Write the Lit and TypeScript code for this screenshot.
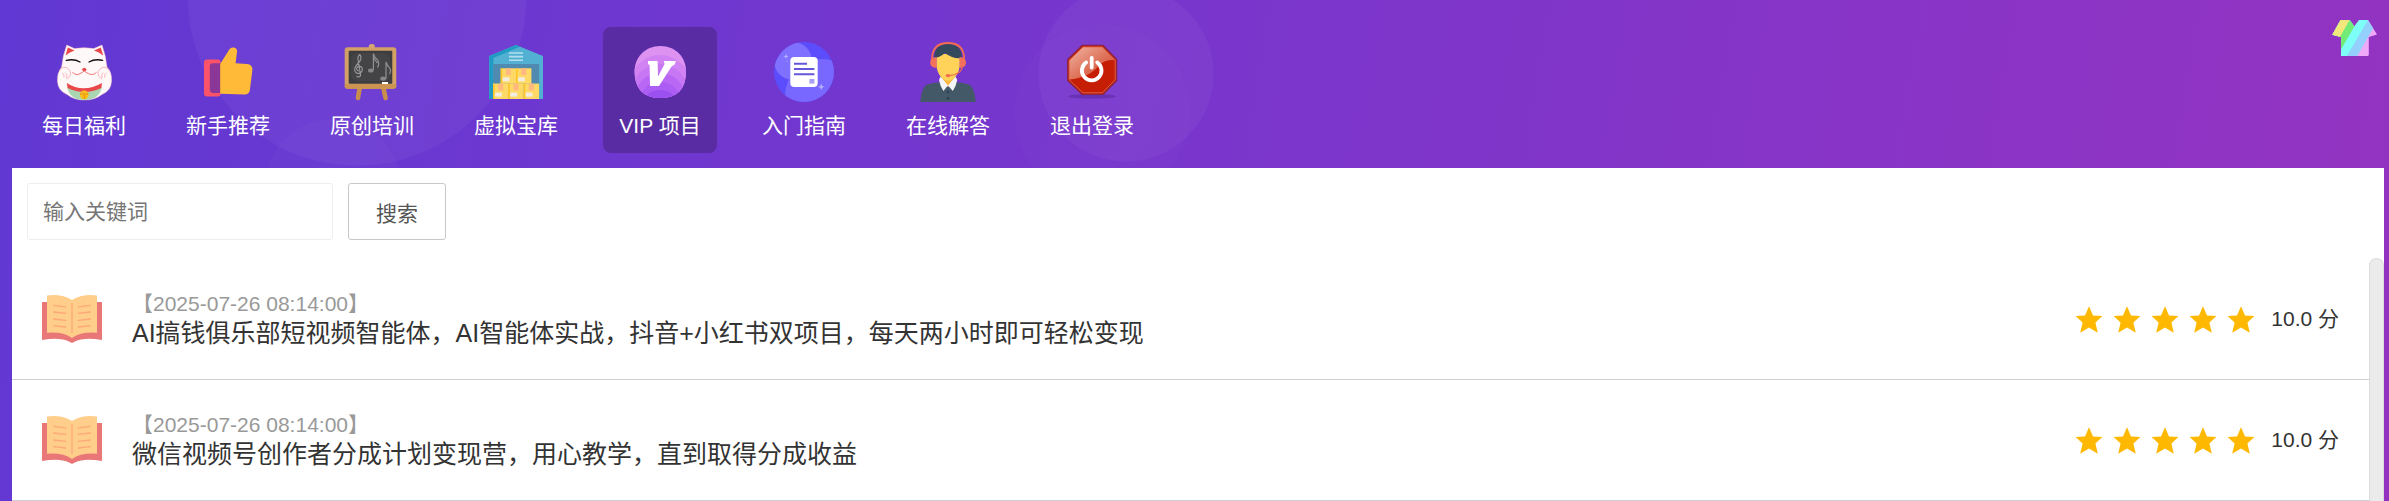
import { LitElement, html, css, svg, TemplateResult } from "lit";
import { customElement, property, state } from "lit/decorators.js";
import { classMap } from "lit/directives/class-map.js";

const cat = svg`
  <path fill="#fff8f8" stroke="#f3b9c4" stroke-width=".5" d="M12.7 3 L20.5 6.6 Q30 4.8 39.8 6.6 L48 3 Q52 14 53 25 Q58 30 57.6 39 Q57 49 48 52.5 Q41 58 30.3 58 Q20 58 13 52.5 Q4 49 3.4 39 Q3 31 7.6 25 Q8.6 14 12.7 3Z"/>
  <path fill="#e9484a" d="M13.8 5.4 L20.6 8.6 Q15.6 10 11.6 13.6Z M46.8 5.4 L40 8.6 Q45 10 49.2 13.6Z"/>
  <path fill="none" stroke="#111" stroke-width="1.4" stroke-linecap="round" d="M12.3 18.4 Q20 16.4 26 20 M35 20 Q41 16.4 48.6 18.4"/>
  <path fill="#e9484a" d="M27.8 28 Q30.3 23.4 32.8 28 L30.3 29.6Z"/>
  <path fill="none" stroke="#e9585a" stroke-width=".8" d="M18.3 30.2 Q22 34 26 31.6 Q28.8 30.6 30.3 28.8 Q31.8 30.6 34.6 31.6 Q39 34 42.6 30.2"/>
  <path fill="none" stroke="#f08a90" stroke-width=".6" d="M5 29 A6 6 0 1 1 12.6 37 M55.6 29 A6 6 0 1 0 48 37 M8 31 Q10.6 31.6 10 35.6 M11.4 30.6 Q13.6 32 12.6 36 M52.6 31 Q50 31.6 50.6 35.6 M49.2 30.6 Q47 32 48 36"/>
  <path fill="#a9d6b0" d="M13 45 Q30 54 48 45 Q45 58 30.3 58 Q16 58 13 45Z"/>
  <path fill="#e9484a" d="M12.8 41 Q29 51.6 48 41 L47.4 46 Q30 54 13.6 46Z"/>
  <circle cx="30.3" cy="52.8" r="4.4" fill="#fbbf1d"/>
  <path stroke="#dc8a12" stroke-width=".9" d="M26 52 H34.6 M30.3 53 V57"/>`;

const thumb = svg`
  <rect x="6" y="17.4" width="16.6" height="37" rx="3" fill="#fb5369"/>
  <path fill="#8a3797" d="M22.4 21.2 H15 Q11.8 21.2 11.8 24.4 V47.6 Q11.8 51 15 51 H22.4Z"/>
  <path fill="#ffba38" d="M22.2 22 L31.6 7 Q33.2 4.8 36.2 5.6 Q39.6 6.8 39 10 L37.6 21.2 L49 22 Q54.6 22.6 54.4 28 L51.8 48.6 Q51 52.2 47.4 52.4 L22.2 51.8Z"/>`;

const board = svg`
  <path stroke="#c98f4a" stroke-width="4.6" stroke-linecap="round" d="M17.6 46 L16 56 M41.4 46 L43.6 56"/>
  <path fill="#d8a974" d="M26.8 6 V4.4 Q27 2 29.8 2 Q32.6 2 32.8 4.4 V6Z"/>
  <rect x="2.7" y="5.3" width="51.6" height="41.4" rx="3" fill="#d3a065"/>
  <rect x="2.7" y="42" width="51.6" height="4.7" rx="2.4" fill="#cc9450"/>
  <rect x="6.7" y="8.7" width="43.6" height="33" rx="1" fill="#3d3d3f"/>
  <rect x="9" y="11" width="39" height="28" rx="6" fill="#4a4a4c" opacity=".55"/>
  <path fill="none" stroke="#9a9a9a" stroke-width="1.1" stroke-linecap="round" d="M16.6 29 Q13.6 28 15.2 25.4 Q18 23 20.2 26 Q21 30.4 16.6 31.6 Q11.6 30.8 13 25.6 Q14.6 22.6 18 19 Q20 15.4 17.8 12.6 Q15.4 14 16.2 19 L18.6 33 Q17.8 36 15 34.4"/>
  <path fill="none" stroke="#8f8f8f" stroke-width="1.2" d="M31.4 28 V11.6 Q32.6 16 36 18.6 Q37.6 22 35.6 25.6 M31.4 15 Q32.4 18 35.4 21 M44 36.4 V20 Q45 24 48 26.4 Q49.4 29 47.6 32"/>
  <ellipse cx="28.8" cy="28.4" rx="2.8" ry="2" fill="#858585"/>
  <ellipse cx="41.2" cy="36.6" rx="3" ry="2.2" fill="#858585"/>
  <rect x="40" y="40" width="6" height="2" fill="#fff"/>`;

const box = (x: number, y: number) => svg`
  <rect x=${x} y=${y} width="15.4" height="15.4" fill="#ffd966"/>
  <rect x=${x} y=${y} width="1.6" height="15.4" fill="#ffc629"/>
  <rect x=${x + 5.2} y=${y} width="5" height="6.8" fill="#ffb980"/>
  <rect x=${x + 2} y=${y + 9} width="6.8" height="4" fill="#f1ede2"/>`;

const warehouse = svg`
  <path fill="#52b1d2" d="M3.3 14 L30 3 L57 14 V57 H3.3Z"/>
  <path fill="#229bc4" d="M3.3 14 L30 3 L34 4.6 L7.4 16 V57 H3.3Z"/>
  <rect x="7.2" y="22" width="46" height="35" fill="#518ab0"/>
  <path stroke="#b5dfee" stroke-width="1.6" d="M23 11 H37 M23 14.6 H37 M23 18.2 H37"/>
  ${box(14.7, 26.3)}${box(30, 26.3)}${box(7, 41.6)}${box(22.3, 41.6)}${box(37.7, 41.6)}`;

const vip = svg`
  <clipPath id="vip-shape"><path d="M30.3 4 C46 4 56 15.6 56 29 C56 47 47 56 30.3 56 C14 56 4.6 47 4.6 29 C4.6 15.6 15 4 30.3 4Z"/></clipPath>
  <g clip-path="url(#vip-shape)">
    <rect width="60" height="60" fill="#dd92f2"/>
    <ellipse cx="30" cy="45" rx="31" ry="32" fill="#d283f3"/>
    <ellipse cx="30" cy="50" rx="28" ry="28" fill="#c777f4"/>
    <ellipse cx="30" cy="55" rx="25" ry="24" fill="#b868f5"/>
    <ellipse cx="30" cy="58" rx="20" ry="18" fill="#ab5df4"/>
    <ellipse cx="30" cy="60" rx="16" ry="12" fill="#9b50f0"/>
  </g>
  <path fill="#fff" d="M18 19 H27.6 L28 34.6 L34.6 22 L33.8 19 H46 L44.6 22.4 L41.6 24.4 L29 44 H20 L19.6 23 L18 22Z"/>`;

const guide = svg`
  <clipPath id="guide-shape"><circle cx="30" cy="30" r="30"/></clipPath>
  <g clip-path="url(#guide-shape)">
    <rect width="60" height="60" fill="#5c4dfc"/>
    <circle cx="19" cy="19" r="19" fill="#7f70ff"/>
    <circle cx="48" cy="54" r="37" fill="#7d6dff" opacity=".85"/>
  </g>
  <rect x="16.3" y="15" width="27.4" height="30" rx="4" fill="#fff"/>
  <path stroke="#6457d9" stroke-width="2" d="M20 21.7 H33 M20 27 H40.4 M20 32.2 H40.4"/>
  <rect x="35.4" y="37" width="5" height="4.6" fill="#a79ff5"/>
  <path fill="#b9b2ff" d="M12 11.6 L12.7 13.7 L14.8 14.4 L12.7 15.1 L12 17.2 L11.3 15.1 L9.2 14.4 L11.3 13.7Z M47.2 41.4 L48.1 43.9 L50.6 44.8 L48.1 45.7 L47.2 48.2 L46.3 45.7 L43.8 44.8 L46.3 43.9Z"/>
  <circle cx="13" cy="19.4" r=".7" fill="#a79ff5"/>`;

const agent = svg`
  <path fill="#445967" d="M2.2 60 Q3.6 45 9 42.6 Q13 41 21 40.4 L30 45 L39 40.4 Q47 41 51 42.6 Q56.4 45 57.8 60Z"/>
  <path fill="#fbb740" d="M23.6 33 H36.6 V38 L30 45 L23.6 38Z"/>
  <path fill="#f3f4f5" d="M22.6 34.4 L30 43.6 L25.4 49 Q22 44 21 38Z M37.6 34.4 L30 43.6 L34.8 49 Q38.2 44 39.2 38Z"/>
  <circle cx="30" cy="50" r="1.4" fill="#2f4256"/><circle cx="30" cy="56.4" r="1.4" fill="#2f4256"/>
  <path fill="#ffd25a" d="M18.4 12 H41.8 V24 Q40.4 34 33.4 38 Q30 39.4 26.8 38 Q19.8 34 18.4 24Z"/>
  <path fill="#35495c" d="M16.4 16 Q16 2 30 2 Q44 2 43.8 16 Q36 17.6 26.8 11 Q22 15.6 16.4 16Z"/>
  <path fill="none" stroke="#f16c51" stroke-width="1.8" d="M14 17 Q14.4 1 30 1 Q45.8 1 46.2 17"/>
  <path fill="#f3705a" d="M18.6 15 V26 Q12.2 25.4 12.2 20.4 Q12.2 15.4 18.6 15Z M41.6 15 V26 Q48 25.4 48 20.4 Q48 15.4 41.6 15Z"/>
  <path fill="none" stroke="#ef6a50" stroke-width="1.2" d="M44.4 24 Q43.6 32.6 31 33.6"/>
  <ellipse cx="30" cy="33.6" rx="2.4" ry="1.7" fill="#f16c51"/>`;

const power = svg`
  <linearGradient id="power-gloss" x1="0" y1="0" x2="1" y2="1"><stop offset="0" stop-color="#f0b4a4"/><stop offset="1" stop-color="#cf3818"/></linearGradient>
  <ellipse cx="30" cy="54.4" rx="24" ry="2.4" fill="#411a80" opacity=".35"/>
  <path fill="#c51e05" stroke="#8d2340" stroke-width="1.4" d="M20.2 3.4 H41 L54.6 17.6 V38.4 L41 52.4 H20.2 L5.8 38.4 V17.6Z"/>
  <path fill="url(#power-gloss)" d="M21 5 H40.2 L53.2 18.2 Q43 16.6 36.4 24 Q27 36 7.2 37.4 V18.4Z"/>
  <path fill="none" stroke="#e2644a" stroke-width=".9" d="M21 5 H40.4 L53.2 18.2 V37.8 L40.4 50.8 H21 L7.2 37.8 V18.4Z"/>
  <path fill="none" stroke="#fff" stroke-width="3.8" stroke-linecap="round" d="M24.2 20.4 A9.8 9.8 0 1 0 35.2 20.4 M29.7 15.8 V25.6"/>`;

const book = svg`
  <path fill="#e97777" d="M0 13 H60 V51 Q42 48 33 52.4 L30 54 L27 52.4 Q18 48 0 51Z"/>
  <path fill="#ffce8b" d="M5 6.4 Q20 4.6 30 11 Q40 4.6 55 6.4 V43.8 Q39 42.6 30 49 Q21 42.6 5 43.8Z"/>
  <path fill="none" stroke="#fda877" stroke-width="1.3" stroke-linecap="round" d="M30 14.6 V43.6 M11.6 16.4 L23.6 17.8 M11.6 23 L23.6 24.4 M11.6 30 L23.6 31.4 M11.6 36.6 L23.6 38 M36.4 17.8 L48.4 16.4 M36.4 24.4 L48.4 23 M36.4 31.4 L48.4 30 M36.4 38 L48.4 36.6"/>`;

interface NavEntry {
  label: string;
  icon: TemplateResult<2>;
}

interface Course {
  time: string;
  title: string;
  score: number;
}

const NAV: NavEntry[] = [
  { label: "每日福利", icon: cat },
  { label: "新手推荐", icon: thumb },
  { label: "原创培训", icon: board },
  { label: "虚拟宝库", icon: warehouse },
  { label: "VIP 项目", icon: vip },
  { label: "入门指南", icon: guide },
  { label: "在线解答", icon: agent },
  { label: "退出登录", icon: power },
];

const COURSES: Course[] = [
  {
    time: "2025-07-26 08:14:00",
    title: "AI搞钱俱乐部短视频智能体，AI智能体实战，抖音+小红书双项目，每天两小时即可轻松变现",
    score: 10,
  },
  {
    time: "2025-07-26 08:14:00",
    title: "微信视频号创作者分成计划变现营，用心教学，直到取得分成收益",
    score: 10,
  },
];

@customElement("course-row")
class CourseRow extends LitElement {
  @property({ attribute: false }) course!: Course;

  static styles = css`
    :host {
      display: flex;
      align-items: center;
      gap: 30px;
      padding: 30px;
      border-bottom: 1px solid #d0d0d0;
    }
    .icon {
      flex: none;
      width: 60px;
      height: 60px;
    }
    .body {
      flex: 1;
      min-width: 0;
    }
    .time {
      display: block;
      font-size: 21px;
      line-height: 28px;
      color: #999;
    }
    .title {
      display: block;
      font-size: 25px;
      line-height: 30px;
      color: #333;
      text-decoration: none;
      overflow: hidden;
      text-overflow: ellipsis;
      white-space: nowrap;
    }
    .stars {
      display: flex;
      gap: 10px;
    }
    .star {
      width: 28px;
      height: 28px;
      fill: #ffb800;
    }
    .rating {
      display: flex;
      align-items: center;
      gap: 16px;
      font-size: 21px;
      line-height: 28px;
      color: #333;
      white-space: nowrap;
    }
  `;

  render() {
    const { time, title, score } = this.course;
    return html`
      <svg class="icon" viewBox="0 0 60 60" aria-hidden="true">${book}</svg>
      <div class="body">
        <time class="time">【${time}】</time>
        <a class="title" href="#">${title}</a>
      </div>
      <div class="rating">
        <div class="stars" aria-hidden="true">
          ${Array.from(
            { length: Math.round(score / 2) },
            () => html`<svg class="star" viewBox="0 0 28 28">
              <path d="M14 1.2 L18 10.4 L27.4 11.1 L20.4 17.6 L22.8 27.8 L14 22.6 L5.2 27.8 L7.6 17.6 L.6 11.1 L10 10.4Z" />
            </svg>`
          )}
        </div>
        <span>${score.toFixed(1)} 分</span>
      </div>
    `;
  }
}

@customElement("app-root")
class AppRoot extends LitElement {
  @state() private active = 4;

  static styles = css`
    :host {
      display: flex;
      flex-direction: column;
      min-height: 100vh;
      box-sizing: border-box;
      padding-left: 12px;
      padding-right: 5px;
      font-family: "Liberation Sans", "Noto Sans CJK SC", sans-serif;
      background:
        radial-gradient(circle at 357px -4px, #ffffff0a 169px, #fff0 170px),
        radial-gradient(circle at 333px 188px, #ffffff05 68px, #fff0 69px),
        radial-gradient(circle at 1126px 74px, #ffffff09 87px, #fff0 88px),
        radial-gradient(circle at 1102px 112px, #ffffff03 87px, #fff0 88px),
        linear-gradient(100deg, #6138d3, #7a36cc 50%, #9433c1);
    }
    .header {
      display: flex;
      justify-content: space-between;
      align-items: flex-start;
      padding: 0 7px 0 15px;
    }
    .nav {
      display: flex;
      gap: 30px;
      padding: 27px 0 15px;
    }
    .item {
      display: flex;
      flex-direction: column;
      align-items: center;
      gap: 9px;
      width: 114px;
      box-sizing: border-box;
      padding: 15px 0 12px;
      border-radius: 8px;
      font-size: 21px;
      line-height: 30px;
      color: #fff;
      text-decoration: none;
      white-space: nowrap;
    }
    .item.active {
      background: #5a2ca4;
    }
    .glyph {
      width: 60px;
      height: 60px;
    }
    .theme {
      margin: 20px 0 0;
      padding: 0;
      border: 0;
      background: none;
      cursor: pointer;
    }
    .shirt {
      display: block;
      width: 45px;
      height: 36px;
    }
    .panel {
      flex: 1;
      display: flex;
      flex-direction: column;
      background: #fff;
    }
    .search {
      display: flex;
      gap: 15px;
      padding: 15px 15px 18px;
    }
    .field,
    .submit {
      box-sizing: border-box;
      height: 57px;
      margin: 0;
      border-radius: 3px;
      background: #fff;
      font: inherit;
      font-size: 21px;
    }
    .field {
      width: 306px;
      padding: 0 15px;
      border: 1px solid #eee;
      color: #333;
    }
    .field::placeholder {
      color: #757575;
      opacity: 1;
    }
    .submit {
      padding: 0 27px;
      border: 1px solid #c9c9c9;
      color: #555;
      cursor: pointer;
    }
    .results {
      flex: 1;
      display: flex;
    }
    .list {
      flex: 1;
      min-width: 0;
      padding-top: 1px;
    }
    .track {
      flex: none;
      width: 15px;
      box-sizing: border-box;
      border: 1px solid #dcdcdc;
      border-bottom: 0;
      border-radius: 8px 8px 0 0;
      background: #ebebeb;
    }
  `;

  private select(event: Event, index: number) {
    event.preventDefault();
    this.active = index;
  }

  render() {
    return html`
      <header class="header">
        <nav class="nav">
          ${NAV.map(
            (entry, i) => html`<a
              href="#"
              class=${classMap({ item: true, active: i === this.active })}
              @click=${(e: Event) => this.select(e, i)}
            >
              <svg class="glyph" viewBox="0 0 60 60" aria-hidden="true">${entry.icon}</svg>
              <span>${entry.label}</span>
            </a>`
          )}
        </nav>
        <button class="theme" type="button" aria-label="换肤">
          <svg class="shirt" viewBox="0 0 45 36" aria-hidden="true">
            <clipPath id="shirt-shape">
              <path d="M.3 14.8 L8.6 0 H17.6 L22.4 6.4 L27.2 0 H36 L45 14.4 L36.8 17 V35 L36 36 H9 V17Z" />
            </clipPath>
            <g clip-path="url(#shirt-shape)">
              <rect width="45" height="36" fill="#efa9f8" />
              <path fill="#93d0fb" d="M0 0 H46 L25.2 36 H0Z" />
              <path fill="#7dfff8" d="M0 0 H36 L14.8 36 H0Z" />
              <path fill="#72ec77" d="M0 0 H27.2 L22.4 6.4 L9 29.4 V36 H0Z" />
              <path fill="#f3e67c" d="M0 0 H17.6 L7.6 17.4 H0Z" />
            </g>
          </svg>
        </button>
      </header>
      <main class="panel">
        <form class="search" @submit=${(e: Event) => e.preventDefault()}>
          <input class="field" type="text" placeholder="输入关键词" aria-label="输入关键词" />
          <button class="submit" type="submit">搜索</button>
        </form>
        <div class="results">
          <div class="list">
            ${COURSES.map((c) => html`<course-row .course=${c}></course-row>`)}
          </div>
          <div class="track" aria-hidden="true"></div>
        </div>
      </main>
    `;
  }
}
